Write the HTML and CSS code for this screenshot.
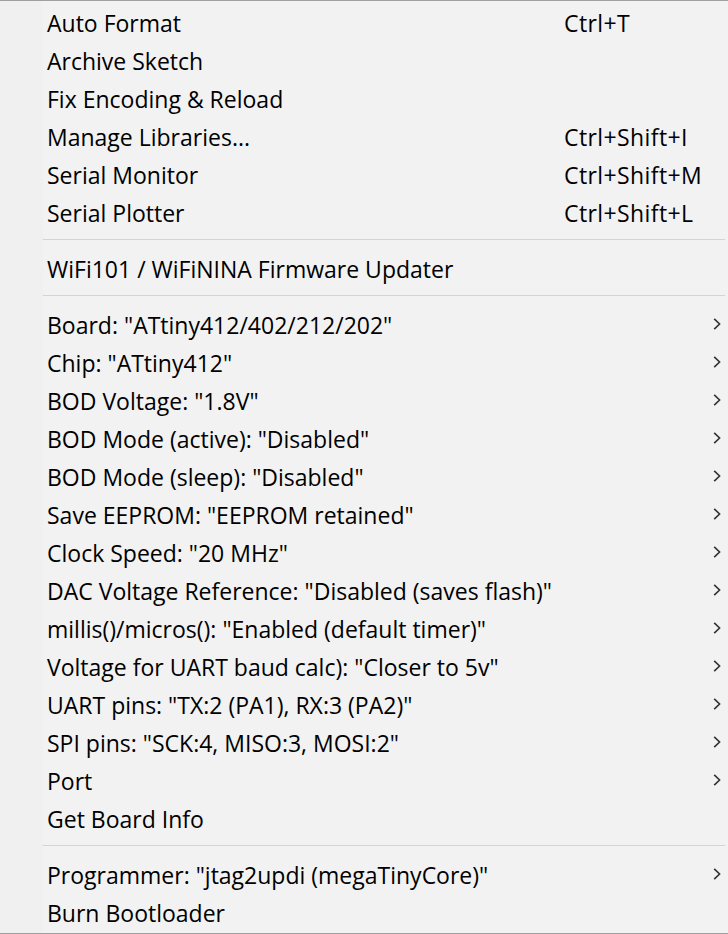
FILE: index.html
```html
<!DOCTYPE html>
<html lang="en">
<head>
    <meta charset="UTF-8">
    <title>Tools menu</title>
    <link rel="stylesheet" href="styles.css">
</head>
<body>

<div class="menu">
    <div class="item"><span class="label">Auto Format</span><span class="key">Ctrl+T</span></div>
    <div class="item"><span class="label">Archive Sketch</span></div>
    <div class="item"><span class="label">Fix Encoding &amp; Reload</span></div>
    <div class="item"><span class="label">Manage Libraries...</span><span class="key">Ctrl+Shift+I</span></div>
    <div class="item"><span class="label">Serial Monitor</span><span class="key">Ctrl+Shift+M</span></div>
    <div class="item"><span class="label">Serial Plotter</span><span class="key">Ctrl+Shift+L</span></div>

    <div class="sep"></div>

    <div class="item"><span class="label">WiFi101 / WiFiNINA Firmware Updater</span></div>

    <div class="sep"></div>

    <!-- board options -->
    <div class="item sub"><span class="label">Board: "ATtiny412/402/212/202"</span></div>
    <div class="item sub"><span class="label">Chip: "ATtiny412"</span></div>
    <div class="item sub"><span class="label">BOD Voltage: "1.8V"</span></div>
    <div class="item sub"><span class="label">BOD Mode (active): "Disabled"</span></div>
    <div class="item sub"><span class="label">BOD Mode (sleep): "Disabled"</span></div>
    <div class="item sub"><span class="label">Save EEPROM: "EEPROM retained"</span></div>
    <div class="item sub"><span class="label">Clock Speed: "20 MHz"</span></div>
    <div class="item sub"><span class="label">DAC Voltage Reference: "Disabled (saves flash)"</span></div>
    <div class="item sub"><span class="label">millis()/micros(): "Enabled (default timer)"</span></div>
    <div class="item sub"><span class="label">Voltage for UART baud calc): "Closer to 5v"</span></div>
    <div class="item sub"><span class="label">UART pins: "TX:2 (PA1), RX:3 (PA2)"</span></div>
    <div class="item sub"><span class="label">SPI pins: "SCK:4, MISO:3, MOSI:2"</span></div>
    <div class="item sub"><span class="label">Port</span></div>
    <div class="item"><span class="label">Get Board Info</span></div>

    <div class="sep"></div>

    <div class="item sub"><span class="label">Programmer: "jtag2updi (megaTinyCore)"</span></div>
    <div class="item"><span class="label">Burn Bootloader</span></div>
</div>

<script>
    // add the submenu chevron to every item that opens a submenu
    const chevron = '<svg class="arrow" width="8" height="12" viewBox="0 0 8 12"><path d="M1.2 0.8 L6.6 6 L1.2 11.2" fill="none" stroke="#333" stroke-width="1.6"/></svg>';
    document.querySelectorAll('.item.sub').forEach(item => {
        item.insertAdjacentHTML('beforeend', '<span class="key"></span>' + chevron);
    });
</script>

</body>
</html>
```

FILE: styles.css
```css
html, body {
    margin: 0;
    padding: 0;
    background: #f2f2f2;
}
body {
    font-family: "Open Sans", "Noto Sans", sans-serif;
    font-size: 23px;
    color: #000;
}
.menu {
    width: 728px;
    height: 934px;
    box-sizing: border-box;
    border-top: 1px solid #a0a0a0;
    border-bottom: 1px solid #a0a0a0;
    padding-top: 4px;
    background: linear-gradient(to right, #f0f0f0 43px, #f2f2f2 43px);
}
.item {
    display: grid;
    grid-template-columns: 517px 1fr 8px;
    align-items: center;
    height: 38px;
    box-sizing: border-box;
    padding: 0 7px 2px 47px;
    line-height: 30px;
    white-space: nowrap;
}
.key {
    grid-column: 2;
    letter-spacing: 0.4px;
}
.arrow {
    grid-column: 3;
    margin-top: -2px;
}
.sep {
    height: 18px;
    margin-left: 43px;
    margin-right: 3px;
    box-sizing: border-box;
    padding-top: 6px;
}
.sep::before {
    content: "";
    display: block;
    height: 1px;
    background: #d4d4d4;
}
```
